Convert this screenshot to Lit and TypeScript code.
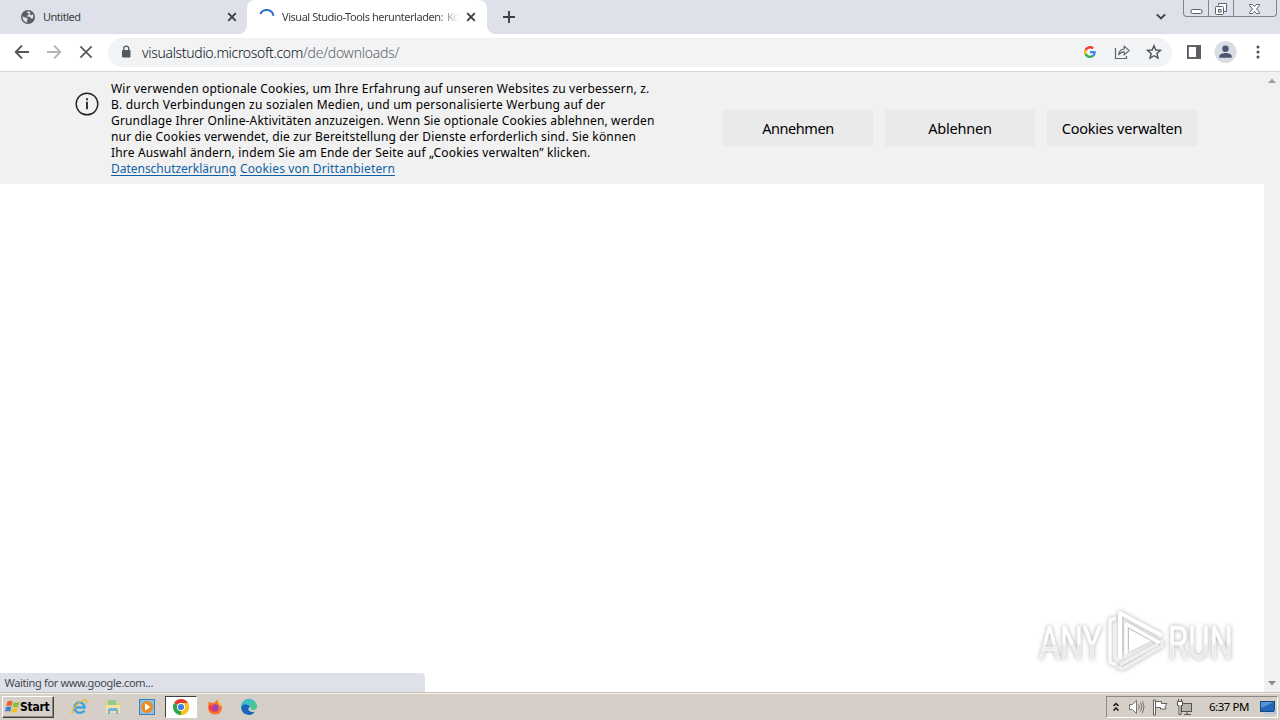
import { LitElement, html, css } from "lit";
import { customElement, property } from "lit/decorators.js";

/** One line of text, tracked so that it spans the given width. */
@customElement("fit-text")
class FitText extends LitElement {
  static styles = css`
    :host { display: block; flex: none; white-space: pre; }
    .run { display: inline-block; text-decoration: inherit; }
  `;
  @property() text = "";
  @property({ type: Number }) width = 0;
  @property({ type: Number }) tracking = 0;
  render() {
    return html`<span class="run" style="letter-spacing:${this.tracking}px">${this.text}</span>`;
  }
  firstUpdated() {
    const run = this.renderRoot.querySelector(".run") as HTMLElement;
    const natural = run.getBoundingClientRect().width;
    if (this.width && this.text.length) {
      this.tracking = (this.width - natural) / this.text.length;
    }
  }
}

const cross = html`<svg class="cross" width="10" height="10" viewBox="0 0 10 10"><path d="M1.2 1.2 8.8 8.8M8.8 1.2 1.2 8.8" stroke="#3c4043" stroke-width="1.9"/></svg>`;

@customElement("browser-tabs")
class BrowserTabs extends LitElement {
  static styles = css`
    :host { display: flex; height: 34px; background: #dee1e9; position: relative; color: #3c4043;
      font: 11px/34px "Noto Sans", sans-serif; }
    svg { display: block; flex: none; }
    .tab { display: flex; align-items: center; box-sizing: border-box; height: 34px; }
    .idle { width: 247px; padding: 0 10px 0 21px; }
    .idle .cross { margin-left: auto; }
    .globe { margin-right: 8px; }
    .active { width: 240px; padding: 0 11px; background: #fff; border-radius: 8px 8px 0 0; position: relative; }
    .active::before, .active::after { content: ""; position: absolute; bottom: 0; width: 8px; height: 8px; }
    .active::before { left: -8px; background: radial-gradient(circle at 0 0, transparent 7.6px, #fff 8px); }
    .active::after { right: -8px; background: radial-gradient(circle at 100% 0, transparent 7.6px, #fff 8px); }
    .spin { margin-right: 7px; }
    .title { display: flex; width: 177px; gap: 4px;
      -webkit-mask-image: linear-gradient(90deg, #000 156px, transparent 178px);
      mask-image: linear-gradient(90deg, #000 156px, transparent 178px); }
    .active .cross { margin-left: 7px; }
    .plus { margin: 11px 0 0 16px; }
    .chev { margin: 13px 0 0 auto; }
    .win { display: flex; margin: 0 3px 0 17px; width: 92px; height: 16px; border: 1px solid #81858d; border-top: 0;
      border-radius: 0 0 4px 4px; }
    .win div { display: flex; justify-content: center; align-items: center; border-right: 1px solid #81858d; }
    .min { width: 24px; } .max { width: 24px; } .win .cls { width: 40px; border: 0; }
  `;
  render() {
    return html`
      <div class="tab idle">
        <svg class="globe" width="14" height="14" viewBox="0 0 14 14"><circle cx="7" cy="7" r="7" fill="#5a5e63"/><path d="M1.5 6.2 4 7.6l1.7.2 1.1 1.5-.7 1 .2 2.2C3.5 12.2 1.4 9.800 1.500 6.200ZM5.400 1.900c2-.6 3.300-.2 4.100.3L8.900 3.700 7.300 4.200 7.100 5.500 5.700 5.700 5.500 6.500 8.700 6.700 9.900 8.400 11.800 8.600C12.800 7 12.500 5.300 11.800 4.300L10.500 5.300 9.400 4.700" fill="#dee1e9"/></svg>
        <fit-text text="Untitled" width="37.5"></fit-text>${cross}
      </div>
      <div class="tab active">
        <svg class="spin" width="17" height="16" viewBox="0 0 17 16"><path d="M2.300 5A7 7 0 0 1 15.500 6.800" fill="none" stroke="#2a6fc9" stroke-width="2"/></svg>
        <div class="title"><fit-text text="Visual Studio-Tools herunterladen:" width="161"></fit-text><fit-text text="Ko" width="12"></fit-text></div>
        ${cross}
      </div>
      <svg class="plus" width="12" height="12" viewBox="0 0 12 12"><path d="M6 0v12M0 6h12" stroke="#3c4043" stroke-width="1.9"/></svg>
      <svg class="chev" width="10" height="8" viewBox="0 0 10 8"><path d="M.8 1.300 5 5.500 9.200 1.300" fill="none" stroke="#3c4043" stroke-width="1.900"/></svg>
      <div class="win">
        <div class="min"><svg width="13" height="15" viewBox="0 0 13 15"><rect x="1" y="8.500" width="11" height="4" rx="1.500" fill="#fff" stroke="#5c6068"/></svg></div>
        <div class="max"><svg width="14" height="15" viewBox="0 0 14 15"><path d="M4.500 4.500V2.500H12.500V10.500H10" fill="#fff" stroke="#5c6068"/><rect x="1.500" y="5.500" width="8" height="8" rx="1" fill="#fff" stroke="#5c6068"/><rect x="4.500" y="8.500" width="2.500" height="2.500" fill="#dee1e9" stroke="#5c6068"/></svg></div>
        <div class="cls"><svg width="13" height="15" viewBox="0 0 13 15"><path d="M1.500 3.500H4.500L6.500 5.700 8.500 3.500H11.500V4.500L8.500 8 11.500 11.500V12.500H8.500L6.500 10.300 4.500 12.500H1.500V11.500L4.500 8 1.500 4.500Z" fill="#fff" stroke="#5c6068"/></svg></div>
      </div>`;
  }
}

@customElement("address-row")
class AddressRow extends LitElement {
  static styles = css`
    :host { display: flex; align-items: center; box-sizing: border-box; height: 38px; padding: 0 14px 1px 14px;
      background: #fff; border-bottom: 1px solid #d5d7da; }
    svg { display: block; flex: none; }
    .fwd { margin-left: 17px; } .stop { margin-left: 17px; }
    .bar { display: flex; align-items: center; box-sizing: border-box; width: 1064px; height: 29px; margin-left: 15px;
      padding: 0 10px 0 12px; border-radius: 15px; background: #f1f3f4;
      font: 14px/29px "Noto Sans", sans-serif; font-weight: 300; color: #101114; }
    .lock { margin-right: 10px; }
    .path { color: #5f6368; }
    .g { margin-left: auto; } .share { margin-left: 18px; } .star { margin-left: 16px; }
    .panel { margin-left: 15px; }
    .me { margin-left: 13px; }
    .dots { margin-left: 19px; }
  `;
  render() {
    return html`
      <svg width="16" height="16" viewBox="0 0 16 16"><path d="M15 8H2M8 1.500 1.700 8 8 14.500" fill="none" stroke="#55585c" stroke-width="1.800"/></svg>
      <svg class="fwd" width="15" height="16" viewBox="0 0 15 16"><path d="M0 8h13M7 1.500 13.300 8 7 14.500" fill="none" stroke="#b4b6b9" stroke-width="1.800"/></svg>
      <svg class="stop" width="14" height="14" viewBox="0 0 14 14"><path d="M1.400 1.400 12.600 12.600M12.600 1.400 1.400 12.600" stroke="#55585c" stroke-width="1.700"/></svg>
      <div class="bar">
        <svg class="lock" width="12" height="14" viewBox="0 0 12 14"><rect x="2" y="5" width="8.500" height="7.500" rx="1" fill="#54585d"/><path d="M3.800 5.500V3.500a2.450 2.450 0 0 1 4.900 0v2" fill="none" stroke="#54585d" stroke-width="1.300"/></svg>
        <fit-text text="visualstudio.microsoft.com" width="161"></fit-text><fit-text class="path" text="/de/downloads/" width="96"></fit-text>
        <svg class="g" width="12" height="12" viewBox="0 0 48 48"><path fill="#EA4335" d="M24 9.500c3.540 0 6.710 1.220 9.210 3.600l6.850-6.850C35.900 2.380 30.470 0 24 0 14.620 0 6.510 5.380 2.560 13.220l7.980 6.190C12.430 13.720 17.740 9.500 24 9.500z"/><path fill="#4285F4" d="M46.980 24.550c0-1.570-.15-3.090-.38-4.550H24v9.020h12.940c-.58 2.960-2.260 5.480-4.780 7.180l7.730 6c4.510-4.180 7.090-10.360 7.090-17.650z"/><path fill="#FBBC05" d="M10.530 28.590a14.500 14.500 0 0 1 0-9.180l-7.980-6.190a24 24 0 0 0 0 21.560l7.980-6.190z"/><path fill="#34A853" d="M24 48c6.480 0 11.930-2.130 15.890-5.810l-7.730-6c-2.150 1.450-4.920 2.300-8.160 2.300-6.260 0-11.570-4.220-13.470-9.910l-7.980 6.190C6.510 42.620 14.620 48 24 48z"/></svg>
        <svg class="share" width="16" height="16" viewBox="0 0 16 16"><path d="M1.500 4v10.500h11V12" fill="none" stroke="#5f6368" stroke-width="1.200"/><path d="M4.500 11C5 7 7.200 5.200 10.200 5V2.300L15.200 6.500 10.200 10.700V7.900C7.500 7.900 5.800 8.900 4.500 11Z" fill="none" stroke="#5f6368" stroke-width="1.100"/></svg>
        <svg class="star" width="16" height="16" viewBox="0 0 16 16"><path d="M8 1.700 9.800 6l4.700.4-3.600 3.100 1.100 4.600L8 11.700l-4 2.400 1.100-4.600L1.500 6.400 6.200 6Z" fill="none" stroke="#4f5358" stroke-width="1.400"/></svg>
      </div>
      <svg class="panel" width="14" height="14" viewBox="0 0 14 14"><rect x=".900" y="1" width="12.200" height="12" fill="#fff" stroke="#54575c" stroke-width="1.800"/><rect x="9" y="0" width="5" height="14" fill="#5b5e63"/></svg>
      <svg class="me" width="23" height="22" viewBox="0 0 23 22"><circle cx="11.500" cy="11" r="11" fill="#d9dce2"/><circle cx="11.500" cy="7.700" r="3.200" fill="#4b5470"/><path d="M5.300 16.800v-1.500c0-2.200 4-3.300 6.200-3.300s6.200 1.100 6.200 3.300v1.500z" fill="#4b5470"/></svg>
      <svg class="dots" width="4" height="14" viewBox="0 0 4 14"><circle cx="2" cy="2" r="1.500" fill="#4a4d51"/><circle cx="2" cy="7" r="1.500" fill="#4a4d51"/><circle cx="2" cy="12" r="1.500" fill="#4a4d51"/></svg>`;
  }
}

const LINES: [string, number][] = [
  ["Wir verwenden optionale Cookies, um Ihre Erfahrung auf unseren Websites zu verbessern, z.", 538.5],
  ["B. durch Verbindungen zu sozialen Medien, und um personalisierte Werbung auf der", 494.5],
  ["Grundlage Ihrer Online-Aktivitäten anzuzeigen. Wenn Sie optionale Cookies ablehnen, werden", 543.5],
  ["nur die Cookies verwendet, die zur Bereitstellung der Dienste erforderlich sind. Sie können", 525],
  ["Ihre Auswahl ändern, indem Sie am Ende der Seite auf „Cookies verwalten” klicken.", 479.5],
];
const ACTIONS: [string, number][] = [["Annehmen", 71.5], ["Ablehnen", 63.5], ["Cookies verwalten", 120.5]];

@customElement("cookie-page")
class CookiePage extends LitElement {
  static styles = css`
    :host { display: flex; height: 620px; background: #fff; position: relative; }
    .view { flex: 1; }
    .banner { display: flex; height: 112px; box-sizing: border-box; padding: 9px 0 0 75px; background: #f1f1f1;
      font: 12px/16px "Noto Sans", sans-serif; color: #000; }
    svg { display: block; flex: none; }
    .info { margin: 11px 12px 0 0; }
    .copy { width: 612px; }
    .links { display: flex; gap: 4px; color: #0e61a6; }
    .links fit-text { text-decoration: underline; text-decoration-thickness: 1px; text-underline-offset: 2px; }
    .actions { display: flex; gap: 12px; margin-top: 29px; }
    .action { display: flex; justify-content: center; width: 150px; height: 36px; background: #eaeaea;
      font-size: 14.500px; line-height: 36px; }
    .scroll { display: flex; flex-direction: column; justify-content: space-between; align-items: center;
      box-sizing: border-box; width: 16px; padding: 6px 0; background: #f1f1f1; }
    .status { position: absolute; left: 0; bottom: 0; width: 425px; height: 19px; box-sizing: border-box;
      padding-left: 4.500px; background: #dee1e9; border-radius: 0 4px 0 0; color: #45484c;
      font: 11px/20px "Noto Sans", sans-serif; }
    .mark { position: absolute; left: 1034px; top: 534px; overflow: visible; filter: drop-shadow(0 0 2px rgba(0,0,0,.32)); }
    .mark text { font: 46px "Roboto", sans-serif; }
  `;
  render() {
    return html`
      <div class="view">
        <div class="banner">
          <svg class="info" width="24" height="24" viewBox="0 0 24 24"><circle cx="12" cy="12" r="10.800" fill="none" stroke="#222" stroke-width="1.400"/><path d="M12 9.800v7.400M12 6.300v1.900" stroke="#222" stroke-width="1.800"/></svg>
          <div class="copy">
            ${LINES.map(([t, w]) => html`<fit-text .text=${t} .width=${w}></fit-text>`)}
            <div class="links"><fit-text text="Datenschutzerklärung" width="125"></fit-text><fit-text text="Cookies von Drittanbietern" width="155"></fit-text></div>
          </div>
          <div class="actions">${ACTIONS.map(([t, w]) => html`<div class="action"><fit-text .text=${t} .width=${w}></fit-text></div>`)}</div>
        </div>
      </div>
      <div class="scroll">
        <svg width="8" height="5" viewBox="0 0 8 5"><path d="M0 5 4 .5 8 5z" fill="#a0a0a0"/></svg>
        <svg width="8" height="5" viewBox="0 0 8 5"><path d="M0 0 4 4.500 8 0z" fill="#8b8b8b"/></svg>
      </div>
      <div class="status"><fit-text text="Waiting for www.google.com..." width="148.5"></fit-text></div>
      <svg class="mark" width="212" height="76" viewBox="0 0 212 76">
        <defs><linearGradient id="fade" x1="0" y1="0" x2="0" y2="1"><stop offset=".5" stop-color="#fff"/><stop offset=".54" stop-color="#ebebeb"/></linearGradient></defs>
        <text x="5" y="53" textLength="63" lengthAdjust="spacingAndGlyphs" fill="url(#fade)" stroke="#fcfcfc" stroke-width=".6">ANY</text>
        <text x="134" y="53" textLength="65" lengthAdjust="spacingAndGlyphs" fill="url(#fade)" stroke="#fcfcfc" stroke-width=".6">RUN</text>
        <path d="M82 12 76 14V56L82 59" fill="none" stroke="#fafafa" stroke-width="3.500" stroke-linejoin="round"/>
        <path d="M86 53V7L128 29.500" fill="none" stroke="#fff" stroke-width="4" stroke-linejoin="round"/>
        <path d="M92 48V18L126 37" fill="none" stroke="#fff" stroke-width="3.500" stroke-linejoin="round"/>
        <path d="M128 34V40L88 63 82 60M124 38 86 59" fill="none" stroke="#efefef" stroke-width="3.500" stroke-linejoin="round"/>
        <path d="M95 46V23L117 35Z" fill="#fff"/>
      </svg>`;
  }
}

const launchers = [
  html`<svg width="18" height="18" viewBox="0 0 18 18"><path d="M14.500 12.500C11 17 4.500 14.500 4.500 9.500 4.500 3 14.300 2.800 14.500 9.500H6" fill="none" stroke="#3aa3e0" stroke-width="2.400"/><path d="M3.200 15C-.5 17 4 7 11 3.500 16 .5 18 2 16 5.500" fill="none" stroke="#e8b62c" stroke-width="1.300"/></svg>`,
  html`<svg width="18" height="18" viewBox="0 0 18 18"><path d="M2 3h5l1 2h8v10H2z" fill="#e9cd6c"/><path d="M4 2h8v5H4z" fill="#8fce90"/><path d="M2 7h14v8H2z" fill="#f4e3a0"/><path d="M4 16v-4q0-2 2-2h6q2 0 2 2v4h-2v-3H6v3z" fill="#6fb4dc"/></svg>`,
  html`<svg width="18" height="18" viewBox="0 0 18 18"><rect x="1.500" y="1.500" width="15" height="15" fill="#8cc0e6" stroke="#3b81b9"/><circle cx="9" cy="9" r="6" fill="#ee8a1c"/><path d="M7 5.300 12.500 9 7 12.700z" fill="#fff"/></svg>`,
];

@customElement("task-bar")
class TaskBar extends LitElement {
  static styles = css`
    :host { display: flex; box-sizing: border-box; height: 28px; padding: 3px 2px 2px 2px; background: #d5cfc8;
      border-top: 1px solid #c9c2ae; box-shadow: inset 0 1px #f3f1ed; color: #000; }
    svg { display: block; flex: none; }
    .start { display: flex; align-items: center; box-sizing: border-box; width: 52px; height: 22px; padding-left: 1px;
      border: 1px solid; border-color: #fff #404040 #404040 #fff; box-shadow: inset -1px -1px #8c8780;
      font: bold 12px/20px "DejaVu Sans Condensed", "DejaVu Sans", sans-serif; }
    .start fit-text { margin-left: -1px; }
    .quick { display: flex; align-items: center; margin-left: 16px; gap: 16px; height: 22px; }
    .slot { display: flex; align-items: center; justify-content: center; width: 32px; height: 22px; box-sizing: border-box;
      margin: 0 -7px; background: #fff; border: 1px solid; border-color: #404040 #fff #fff #404040; }
    .tray { display: flex; align-items: center; box-sizing: border-box; width: 172px; height: 22px; margin-left: auto;
      padding: 0 1px 0 6px; border: 1px solid; border-color: #8c8780 #fff #fff #8c8780;
      font: 11.500px/20px "Noto Sans", sans-serif; }
    .vol { margin-left: 9px; } .flag { margin-left: 7px; } .net { margin-left: 8px; }
    .clock { margin: 0 10px 0 16px; }
  `;
  render() {
    return html`
      <div class="start"><svg width="17" height="18" viewBox="0 0 17 18"><path d="M3.500 3.500Q6 2 8.500 3.500L7.500 8Q5 6.800 2.300 8z" fill="#e8622c"/><path d="M9.500 4Q12 5.500 15.500 4L14.300 8.500Q11.500 10 8.500 8.500z" fill="#8bbf3a"/><path d="M2 9Q4.500 8 7.300 9L6.200 13.500Q3.500 12.300 1 13.500z" fill="#3d82cf"/><path d="M8.200 9.500Q11 11 14 9.500L12.800 14Q10 15.500 7.200 14z" fill="#f5c12e"/></svg><fit-text text="Start" width="29.500"></fit-text></div>
      <div class="quick">
        ${launchers}
        <div class="slot"><svg width="16" height="16" viewBox="0 0 16 16"><path d="M8 8 1.070 4A8 8 0 0 1 14.930 4z" fill="#e33b2e"/><path d="M8 8 14.930 4A8 8 0 0 1 8 16z" fill="#fbc116"/><path d="M8 8V16A8 8 0 0 1 1.070 4z" fill="#2da44e"/><path d="M8 4h6.930A8 8 0 0 1 8 16l3.500-6z" fill="#fbc116"/><circle cx="8" cy="8" r="4" fill="#fff"/><circle cx="8" cy="8" r="3.100" fill="#3f7fe8"/></svg></div>
        <svg width="18" height="18" viewBox="0 0 18 18"><path d="M3 3.500 5.500 5 9 4.500 11 1.500 13 5Q16.500 7 16 11 14.500 16.500 9 16.500 2.500 16 2 10 2 6 3 3.500z" fill="#f9752c"/><path d="M11 1.500 12.500 6 15 9Q16.500 6 13 4z" fill="#fbc62f"/><circle cx="9" cy="10" r="3.700" fill="#9b42c4"/><path d="M3 8Q7 5.500 8.500 8.500L6 10Q7 13 11 12.500 6 16 3 11z" fill="#f23f4a"/></svg>
        <svg width="18" height="18" viewBox="0 0 18 18"><path d="M1 9A8 8 0 0 1 17 8.500Q17 12 12.500 12 10 11.500 11 9.500 10.500 6.500 7 6.500 3 6.500 1 9z" fill="#39bfc5"/><path d="M1 9Q3 5.500 7 6.500 10 7 10.500 9 8 9 8.500 12 10.500 15 15 13.500 12.500 17 9 17 1.500 16.500 1 9z" fill="#1767b8"/><path d="M11 2.500Q17 5 17 9 15.500 12 12.500 12 10 11.500 11 9.500z" fill="#4ed06b" opacity=".65"/></svg>
      </div>
      <div class="tray">
        <svg width="6" height="10" viewBox="0 0 6 10"><path d="M.500 4 3 1.500 5.500 4M.500 8.500 3 6 5.500 8.500" fill="none" stroke="#111" stroke-width="1.500"/></svg>
        <svg class="vol" width="17" height="16" viewBox="0 0 17 16"><path d="M1.500 5.500h3l4-4v13l-4-4h-3z" fill="#fff" stroke="#77736e"/><path d="M10.500 5.500q1.800 2.500 0 5M12.500 3.500q3 4.500 0 9M14.500 2q3 6 0 12" fill="none" stroke="#77736e"/></svg>
        <svg class="flag" width="16" height="17" viewBox="0 0 16 17"><path d="M1.500 1h2v15h-2zM3.500 2.500h6v2h5.500l-2 3 1 2.500H8.500V8.500h-5z" fill="#fff" stroke="#66625e"/></svg>
        <svg class="net" width="17" height="17" viewBox="0 0 17 17"><rect x="5.500" y="4.500" width="10" height="8" fill="#b8b4ae" stroke="#57534f"/><path d="M8 15.500h7M11 13v2" stroke="#57534f"/><path d="M1.500 2.500h5v4h-1.500v9H3v-9H1.500zM2.500 0v2M5.500 0v2" fill="#fff" stroke="#57534f"/></svg>
        <fit-text class="clock" text="6:37 PM" width="40"></fit-text>
        <svg width="18" height="16" viewBox="0 0 18 16"><rect x="1.500" y="2.500" width="14" height="10" fill="#2366b5" stroke="#17477f"/><path d="M2 3h13L2 9z" fill="#5696d6"/><path d="M5 14.500h11V11" fill="none" stroke="#aac5df" stroke-width="1.500"/></svg>
      </div>`;
  }
}

@customElement("app-root")
class AppRoot extends LitElement {
  static styles = css`
    :host { display: block; width: 1280px; height: 720px; overflow: hidden; background: #fff; }
  `;
  render() {
    return html`<browser-tabs></browser-tabs><address-row></address-row><cookie-page></cookie-page><task-bar></task-bar>`;
  }
}
